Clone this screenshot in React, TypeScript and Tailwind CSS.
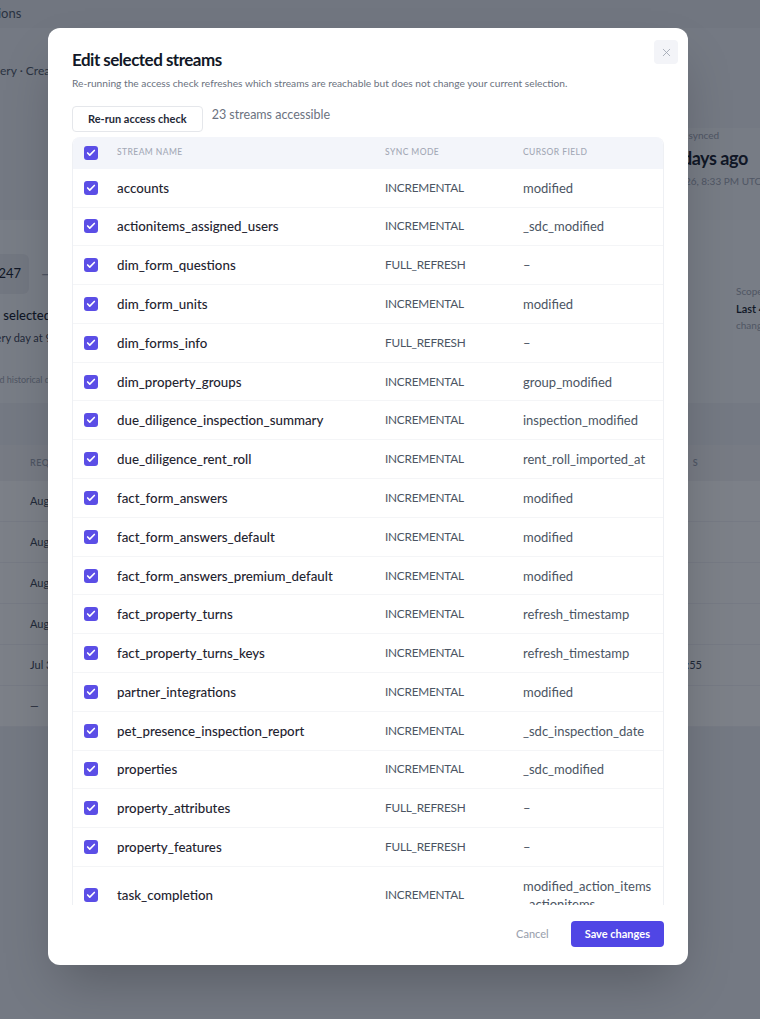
import { Check, X } from "lucide-react";

type Stream = {
  name: string;
  mode: "INCREMENTAL" | "FULL_REFRESH";
  cursor: string;
};

const streams: Stream[] = [
  { name: "accounts", mode: "INCREMENTAL", cursor: "modified" },
  { name: "actionitems_assigned_users", mode: "INCREMENTAL", cursor: "_sdc_modified" },
  { name: "dim_form_questions", mode: "FULL_REFRESH", cursor: "–" },
  { name: "dim_form_units", mode: "INCREMENTAL", cursor: "modified" },
  { name: "dim_forms_info", mode: "FULL_REFRESH", cursor: "–" },
  { name: "dim_property_groups", mode: "INCREMENTAL", cursor: "group_modified" },
  { name: "due_diligence_inspection_summary", mode: "INCREMENTAL", cursor: "inspection_modified" },
  { name: "due_diligence_rent_roll", mode: "INCREMENTAL", cursor: "rent_roll_imported_at" },
  { name: "fact_form_answers", mode: "INCREMENTAL", cursor: "modified" },
  { name: "fact_form_answers_default", mode: "INCREMENTAL", cursor: "modified" },
  { name: "fact_form_answers_premium_default", mode: "INCREMENTAL", cursor: "modified" },
  { name: "fact_property_turns", mode: "INCREMENTAL", cursor: "refresh_timestamp" },
  { name: "fact_property_turns_keys", mode: "INCREMENTAL", cursor: "refresh_timestamp" },
  { name: "partner_integrations", mode: "INCREMENTAL", cursor: "modified" },
  { name: "pet_presence_inspection_report", mode: "INCREMENTAL", cursor: "_sdc_inspection_date" },
  { name: "properties", mode: "INCREMENTAL", cursor: "_sdc_modified" },
  { name: "property_attributes", mode: "FULL_REFRESH", cursor: "–" },
  { name: "property_features", mode: "FULL_REFRESH", cursor: "–" },
  { name: "task_completion", mode: "INCREMENTAL", cursor: "modified_action_items\u200B_actionitems" },
  { name: "task_templates", mode: "INCREMENTAL", cursor: "modified" },
  { name: "units", mode: "INCREMENTAL", cursor: "_sdc_modified" },
  { name: "users", mode: "INCREMENTAL", cursor: "modified" },
  { name: "work_orders", mode: "INCREMENTAL", cursor: "updated_at" },
];

const Checkbox = () => (
  <span className="flex h-[14px] w-[14px] items-center justify-center rounded-[3px] bg-[#5b4ee6]">
    <Check className="h-[10px] w-[10px] text-white" strokeWidth={4} />
  </span>
);

// dimmed page that sits behind the dialog
const BackgroundPage = () => (
  <div className="min-h-[1019px] w-[760px] overflow-hidden bg-[#eef0f4] text-[#111827]">
    <div className="h-[28px] bg-[#e6e8ed] pt-[4px] text-[13px] text-[#4b5563]">
      <span className="-ml-[2px]">ions</span>
    </div>
    <div className="h-[72px] pt-[34px] text-[12px] text-[#4b5563]">ery · Created Jan 12, 2026</div>
    <div className="flex h-[120px] justify-end pt-[28px]">
      <div className="w-[92px] whitespace-nowrap bg-[#f4f5f8]">
        <div className="text-[10px] text-[#9ca3af]">Last synced</div>
        <div className="mt-[2px] text-[18px] font-bold tracking-tight">3 days ago</div>
        <div className="-ml-[24px] mt-[2px] text-[10px] text-[#9ca3af]">Feb 2, 2026, 8:33 PM UTC</div>
      </div>
    </div>
    <div className="flex h-[183px] justify-between bg-[#f7f8fa] pt-[34px]">
      <div className="whitespace-nowrap">
        <div className="flex items-center gap-[12px]">
          <div className="-ml-[19px] rounded-[6px] bg-[#e9ebef] py-[10px] pl-[10px] pr-[8px] text-[13px]">1247</div>
          <span className="text-[#9ca3af]">→</span>
        </div>
        <div className="-ml-[15px] mt-[12px] text-[13px] font-medium">23 selected</div>
        <div className="-ml-[16px] mt-[5px] text-[11px] text-[#374151]">Every day at 9:00 AM</div>
        <div className="-ml-[40px] mt-[26px] text-[9px] text-[#9ca3af]">Includes ad historical data</div>
      </div>
      <div className="w-[24px] whitespace-nowrap pt-[30px]">
        <div className="text-[10px] text-[#9ca3af]">Scope</div>
        <div className="mt-[2px] text-[11px] font-semibold">Last 4</div>
        <div className="text-[10px] text-[#9ca3af]">changes</div>
      </div>
    </div>
    <div className="mt-[42px] bg-white">
      <div className="flex h-[36px] items-center justify-between bg-[#f3f4f7] pl-[30px] text-[9px] font-semibold uppercase tracking-wider text-[#9ca3af]">
        <span>Requested</span>
        <span className="pr-[62px]">s</span>
      </div>
      {["Aug 4", "Aug 3", "Aug 2", "Aug 1", "Jul 31", "—"].map((d, i) => (
        <div key={i} className="flex h-[41px] items-center justify-between border-b border-[#f1f2f5] pl-[30px] text-[11px] text-[#374151]">
          <span>{d}</span>
          <span className="pr-[58px]">{i === 4 ? "0:55" : ""}</span>
        </div>
      ))}
    </div>
  </div>
);

export default function App() {
  return (
    <div className="relative font-['Lato',sans-serif]">
      <BackgroundPage />
      <div className="absolute inset-0 bg-[#111827]/55" />
      <div className="absolute left-[48px] top-[28px] flex h-[937px] w-[640px] flex-col rounded-[12px] bg-white px-[24px] pb-[18px] pt-[19px] shadow-2xl">
        <div className="flex items-start justify-between">
          <div>
            <h2 className="text-[17px] font-bold tracking-[-0.03em] text-[#111827]">Edit selected streams</h2>
            <p className="mt-[3px] text-[10.2px] text-[#6b7280]">
              Re-running the access check refreshes which streams are reachable but does not change your current
              selection.
            </p>
          </div>
          <button className="-mr-[14px] -mt-[7px] flex h-[24px] w-[24px] items-center justify-center rounded-[4px] bg-[#f3f4f8] text-[#9ca3af]">
            <X className="h-[13px] w-[13px]" strokeWidth={1.5} />
          </button>
        </div>

        <div className="mt-[15px] flex items-start gap-[9px]">
          <button className="h-[26px] rounded-[4px] border border-[#e5e7eb] px-[15px] text-[11px] font-bold text-[#1f2937]">
            Re-run access check
          </button>
          <span className="text-[12.5px] text-[#6b7280]">23 streams accessible</span>
        </div>

        <div className="mt-[5px] min-h-0 flex-1 overflow-y-auto rounded-t-[8px] border-x border-[#eef0f4] [scrollbar-width:none]">
          <div className="flex h-[32px] items-center bg-[#f3f5fa] text-[8.5px] font-medium uppercase tracking-[0.05em] text-[#a3a9b6]">
            <div className="w-[44px] pl-[11px]">
              <Checkbox />
            </div>
            <div className="w-[268px]">Stream name</div>
            <div className="w-[138px]">Sync mode</div>
            <div className="flex-1">Cursor field</div>
          </div>
          {streams.map((s) => (
            <div key={s.name} className="flex items-center border-b border-[#f4f5f7] py-[9.9px] leading-[18px]">
              <div className="w-[44px] pl-[11px]">
                <Checkbox />
              </div>
              <div className="w-[268px] text-[13.3px] font-medium text-[#1f2430]">{s.name}</div>
              <div className="w-[138px] text-[11.8px] tracking-[-0.02em] text-[#4b5563]">{s.mode}</div>
              <div className="min-w-0 flex-1 pr-[12px] text-[13px] text-[#4b5563]">{s.cursor}</div>
            </div>
          ))}
        </div>

        <div className="mt-[16px] flex items-center justify-end gap-[22px]">
          <button className="text-[11px] font-medium text-[#9ca3af]">Cancel</button>
          <button className="h-[26px] rounded-[4px] bg-[#5046e5] px-[14px] text-[11px] font-bold text-white">
            Save changes
          </button>
        </div>
      </div>
    </div>
  );
}
